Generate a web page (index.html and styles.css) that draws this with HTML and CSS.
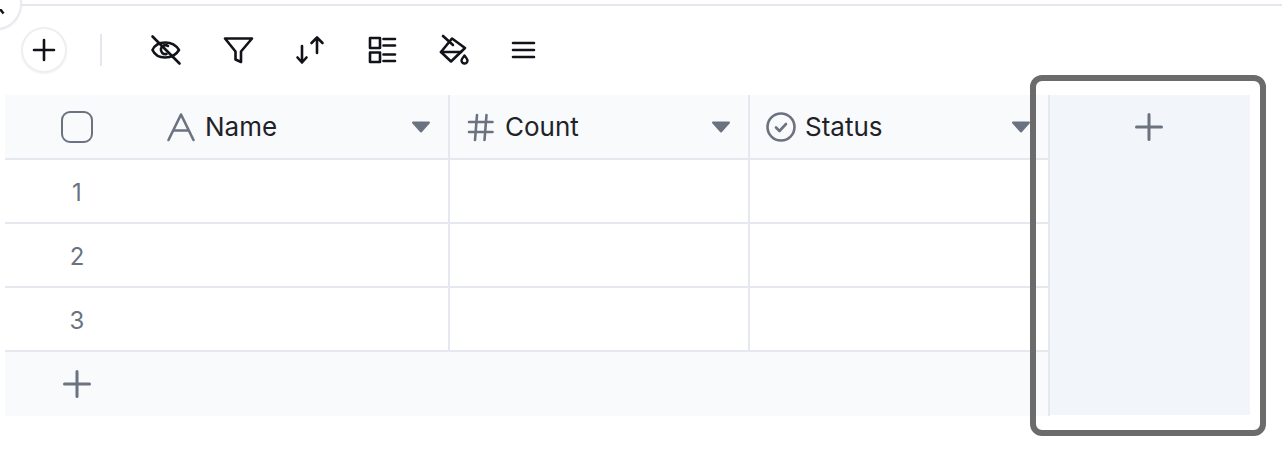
FILE: index.html
```html
<!DOCTYPE html>
<html lang="en">
<head>
    <meta charset="UTF-8">
    <meta name="viewport" content="width=device-width, initial-scale=1.0">
    <title>Table</title>
    <link rel="stylesheet" href="styles.css">
</head>
<body>
    <div class="collapse">
        <svg class="collapse-icon" width="8" height="8" viewBox="0 0 8 8"><path d="M0 0l3.500 4.500"></path></svg>
    </div>
    <div class="top-line"></div>

    <div class="toolbar">
        <button class="add-btn">
            <svg width="24" height="24" viewBox="0 0 24 24" class="tool-icon"><path d="M12 2v20M2 12h20"></path></svg>
        </button>
        <div class="separator"></div>
        <div class="tools">
            <svg width="32" height="32" viewBox="0 0 32 32" class="tool-icon"><path d="M2.500 16C7 6 23 6 29 16C23 26 7 26 2.500 16Z"></path><path d="M18 12a4.500 4.500 0 1 0-1.500 8"></path><path d="M2.500 2.500l27 27"></path></svg>
            <svg width="32" height="32" viewBox="0 0 32 32" class="tool-icon"><path d="M3 4.500h27L19 17.500V28l-5.500-2.500v-8Z"></path></svg>
            <svg width="32" height="32" viewBox="0 0 32 32" class="tool-icon"><path d="M8 12v16.500M3.500 23.500l4.500 5 4.500-5"></path><path d="M23 4v15M17.500 9l5.500-5.500L28.500 9"></path></svg>
            <svg width="32" height="32" viewBox="0 0 32 32" class="tool-icon"><rect x="4" y="4" width="10" height="10"></rect><rect x="4" y="18.500" width="10" height="9.500"></rect><path d="M17.500 5h11.500M17.500 11.500h11.500M17.500 20.500h11.500M17.500 27h11.500"></path></svg>
            <svg width="32" height="32" viewBox="0 0 32 32" class="tool-icon"><path d="M14 4.500L27 14 13 27.500 3 18Z"></path><path d="M3 18h20"></path><path d="M5 2l10 9"></path><path class="solid" d="M26.500 21.500c-2 2.500-3 3.800-3 5a3 3 0 0 0 6 0c0-1.200-1-2.500-3-5Z"></path></svg>
            <svg width="32" height="32" viewBox="0 0 32 32" class="tool-icon"><path d="M3 9h21M3 16h21M3 23h21"></path></svg>
        </div>
    </div>

    <div class="table">
        <div class="cell head">
            <div class="row-no"><span class="checkbox"></span></div>
            <div class="field">
                <svg width="32" height="32" viewBox="0 0 32 32" class="field-icon"><path d="M3.500 29L16 3.500 28.500 29M8.500 19.500h15"></path></svg>
                <span class="field-name">Name</span>
                <svg width="20" height="12" viewBox="0 0 20 12" class="caret"><path d="M2 1.500h16L10 10.500Z"></path></svg>
            </div>
        </div>
        <div class="cell head">
            <div class="field">
                <svg width="32" height="32" viewBox="0 0 32 32" class="field-icon"><path d="M12 4l-2 25M21.500 4l-2 25M4 11h23.500M4 21h23.500"></path></svg>
                <span class="field-name">Count</span>
                <svg width="20" height="12" viewBox="0 0 20 12" class="caret"><path d="M2 1.500h16L10 10.500Z"></path></svg>
            </div>
        </div>
        <div class="cell head">
            <div class="field">
                <svg width="32" height="32" viewBox="0 0 32 32" class="field-icon"><circle cx="16" cy="16" r="13.500"></circle><path d="M11 16.500l3.500 3.500 6.500-7"></path></svg>
                <span class="field-name">Status</span>
                <svg width="20" height="12" viewBox="0 0 20 12" class="caret"><path d="M2 1.500h16L10 10.500Z"></path></svg>
            </div>
        </div>
        <div class="add-col">
            <svg width="28" height="28" viewBox="0 0 28 28" class="plus-icon"><path d="M14 1.500v25M1.500 14h25"></path></svg>
        </div>

        <div class="cell"><div class="row-no num">1</div></div>
        <div class="cell"></div>
        <div class="cell"></div>
        <div class="cell"><div class="row-no num">2</div></div>
        <div class="cell"></div>
        <div class="cell"></div>
        <div class="cell"><div class="row-no num">3</div></div>
        <div class="cell"></div>
        <div class="cell"></div>

        <div class="footer">
            <div class="row-no">
                <svg width="28" height="28" viewBox="0 0 28 28" class="plus-icon"><path d="M14 1.500v25M1.500 14h25"></path></svg>
            </div>
        </div>
    </div>

    <div class="highlight"></div>
</body>
</html>
```

FILE: styles.css
```css
body {
    font-family: Inter, 'Liberation Sans', sans-serif;
    margin: 0;
    height: 458px;
    overflow: hidden;
    position: relative;
    background-color: white;
}
.collapse {
    position: absolute;
    left: -30px;
    top: -22px;
    width: 52px;
    height: 52px;
    border: 2px solid #e9eaef;
    border-radius: 50%;
    box-sizing: border-box;
    background-color: white;
    box-shadow: 0 1px 2px rgba(0, 0, 0, 0.05);
}
.collapse-icon {
    position: absolute;
    left: 28px;
    top: 29px;
    fill: none;
    stroke: #111318;
    stroke-width: 2.5;
}
.top-line {
    height: 2px;
    margin: 4px 0 0 21px;
    background-color: #e5e7ef;
}
.toolbar {
    display: flex;
    align-items: center;
    height: 88px;
    margin-bottom: 1px;
    padding-left: 21px;
}
.add-btn {
    display: flex;
    align-items: center;
    justify-content: center;
    width: 46px;
    height: 46px;
    padding: 0;
    border: 2px solid #eeeff3;
    border-radius: 50%;
    background-color: white;
    box-shadow: 0 1px 2px rgba(0, 0, 0, 0.05);
}
.separator {
    width: 2px;
    height: 32px;
    margin: 0 48px 0 33px;
    background-color: #e5e7ef;
}
.tools {
    display: flex;
    gap: 40px;
}
.tool-icon {
    fill: none;
    stroke: #111318;
    stroke-width: 2.6;
    stroke-linecap: round;
    stroke-linejoin: round;
}
.tool-icon .solid {
    stroke-width: 2.4;
}
.table {
    display: grid;
    grid-template-columns: 445px 300px 300px 200px;
    grid-template-rows: 65px 64px 64px 64px 64px;
    margin-left: 5px;
    width: 1245px;
    font-size: 26px;
}
.cell {
    display: flex;
    align-items: center;
    box-sizing: border-box;
    border-right: 2px solid #e5e8ef;
    border-bottom: 2px solid #e5e8ef;
}
.head {
    background-color: #f9fafc;
}
.row-no {
    display: flex;
    align-items: center;
    justify-content: center;
    flex: none;
    width: 144px;
    font-size: 24px;
    color: #6b7280;
}
.num {
    padding-top: 2px;
}
.checkbox {
    width: 32px;
    height: 32px;
    box-sizing: border-box;
    border: 2.500px solid #6b7280;
    border-radius: 9px;
}
.field {
    display: flex;
    flex: 1;
    align-items: center;
    gap: 8px;
    padding: 0 17px 0 15px;
}
.row-no + .field {
    padding-left: 16px;
}
.field-name {
    flex: 1;
    color: #1f2328;
}
.field-icon {
    fill: none;
    stroke: #6b7280;
    stroke-width: 2.600;
    stroke-linecap: round;
    stroke-linejoin: round;
}
.plus-icon {
    fill: none;
    stroke: #6b7280;
    stroke-width: 3;
    stroke-linecap: round;
}
.caret {
    fill: #6b7280;
    stroke: #6b7280;
    stroke-width: 2;
    stroke-linejoin: round;
}
.add-col {
    grid-column: 4;
    grid-row: 1 / -1;
    display: flex;
    justify-content: center;
    margin-bottom: 1px;
    padding: 18px 2px 0 0;
    background-color: #f2f5fa;
}
.footer {
    grid-column: 1 / 4;
    display: flex;
    align-items: center;
    box-sizing: border-box;
    padding-bottom: 1px;
    border-right: 2px solid #e5e8ef;
    background-color: #f9fafc;
}
.highlight {
    position: absolute;
    left: 1030px;
    top: 75px;
    width: 236px;
    height: 361px;
    box-sizing: border-box;
    border: 6px solid #6b6b6b;
    border-radius: 12px;
}
```
